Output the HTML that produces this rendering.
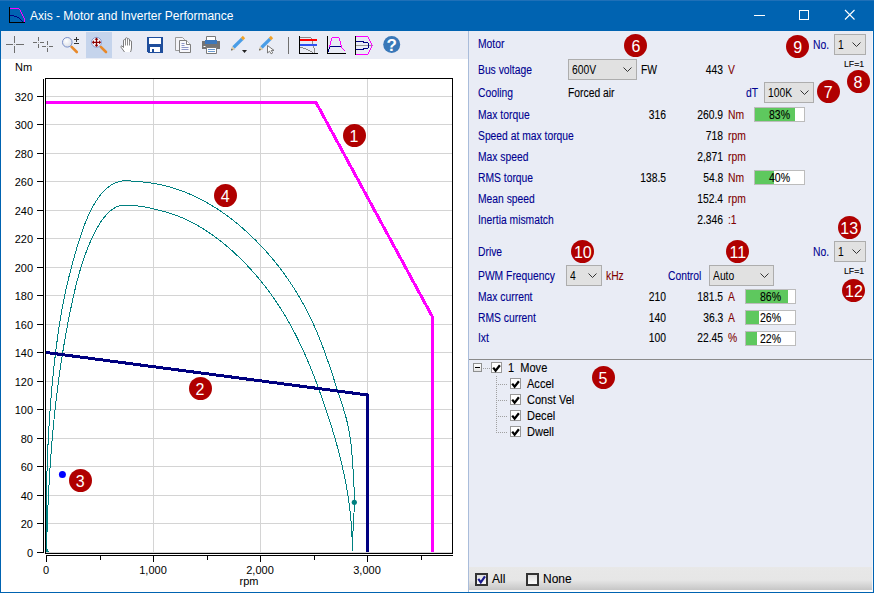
<!DOCTYPE html>
<html><head><meta charset="utf-8">
<style>
*{margin:0;padding:0;box-sizing:border-box}
html,body{width:874px;height:593px;overflow:hidden;background:#fff;font-family:"Liberation Sans",sans-serif}
.a{position:absolute}
#title{left:0;top:0;width:874px;height:31px;background:#0063B1}
#ttext{left:30px;top:9px;font-size:12px;color:#fff;white-space:nowrap}
#bl{left:0;top:0;width:1px;height:593px;background:#0063B1}
#br{left:873px;top:0;width:1px;height:593px;background:#0063B1}
#bb{left:0;top:592px;width:874px;height:1px;background:#0063B1}
#tool{left:1px;top:31px;width:467px;height:28px;background:#E9ECF5}
#sep{left:468px;top:31px;width:1px;height:561px;background:#A9BCDA}
#panel{left:469px;top:31px;width:404px;height:328px;background:#E9ECF5}
#split{left:469px;top:359px;width:404px;height:1px;background:#8A8A8A}
#tree{left:469px;top:360px;width:404px;height:207px;background:#E9ECF5}
#bot{left:469px;top:567px;width:404px;height:23px;background:linear-gradient(#E8E8E8 0,#E6E6E6 13px,#C6C6C6 23px)}
#botw{left:469px;top:590px;width:404px;height:2px;background:#fff}
#rw{left:872px;top:31px;width:1px;height:561px;background:#F4F4F8}
.t{position:absolute;white-space:nowrap;font-size:12px;line-height:13px;transform:scaleX(0.86);transform-origin:0 0;-webkit-text-stroke:0.1px currentColor}
.t.r2{transform-origin:100% 0}
.lb{color:#000090}
.v{color:#000}
.u{color:#800000}
.r{text-align:right}
.combo{position:absolute;background:#E1E1E1;border:1px solid #ADADAD}
.combo span{position:absolute;left:3px;top:4px;font-size:12px;line-height:13px;color:#000;transform:scaleX(0.86);transform-origin:0 0;white-space:nowrap}
.combo svg{position:absolute;right:4px;top:7px}
.bar{position:absolute;background:#fff;border:1px solid #BCBCBC;height:15px}
.bar i{position:absolute;left:0;top:0;bottom:0;background:#5EC85E}
.bar b{position:absolute;left:0;right:0;top:1px;text-align:center;font-weight:normal;font-size:12px;line-height:13px;color:#000;transform:scaleX(0.88);-webkit-text-stroke:0.1px #000}
.tt{color:#000;transform:scaleX(0.92)}
.num{position:absolute;width:23px;height:23px;border-radius:50%;background:#B00000;color:#fff;font-size:16px;line-height:26px;text-align:center}
</style></head><body>
<div id="title" class="a"></div>
<div id="ttext" class="a">Axis - Motor and Inverter Performance</div>
<div id="tool" class="a"></div>
<!--CHART-->
<svg class="a" style="left:0;top:0" width="468" height="593" viewBox="0 0 468 593">
<path d="M46 552.5H452 M46 523.5H452 M46 495.5H452 M46 466.5H452 M46 438.5H452 M46 409.5H452 M46 381.5H452 M46 352.5H452 M46 324.5H452 M46 295.5H452 M46 267.5H452 M46 238.5H452 M46 210.5H452 M46 181.5H452 M46 153.5H452 M46 124.5H452 M46 96.5H452 M153.5 79V553 M260.5 79V553 M367.5 79V553" stroke="#D4D4D4" stroke-width="1" fill="none" shape-rendering="crispEdges"/>
<rect x="45.5" y="78.5" width="407" height="475" fill="none" stroke="#000" stroke-width="1" shape-rendering="crispEdges"/>
<path d="M43.5 79V553 M37 552.5H43 M37 523.5H43 M37 495.5H43 M37 466.5H43 M37 438.5H43 M37 409.5H43 M37 381.5H43 M37 352.5H43 M37 324.5H43 M37 295.5H43 M37 267.5H43 M37 238.5H43 M37 210.5H43 M37 181.5H43 M37 153.5H43 M37 124.5H43 M37 96.5H43 M46 555.5H453 M46.5 555V562 M100.5 555V560 M153.5 555V562 M207.5 555V560 M260.5 555V562 M314.5 555V560 M367.5 555V562 M421.5 555V560" stroke="#000" stroke-width="1" fill="none" shape-rendering="crispEdges"/>
<g font-family="Liberation Sans" font-size="11" fill="#000"><text x="33" y="557" text-anchor="end">0</text><text x="33" y="528" text-anchor="end">20</text><text x="33" y="500" text-anchor="end">40</text><text x="33" y="471" text-anchor="end">60</text><text x="33" y="443" text-anchor="end">80</text><text x="33" y="414" text-anchor="end">100</text><text x="33" y="386" text-anchor="end">120</text><text x="33" y="357" text-anchor="end">140</text><text x="33" y="329" text-anchor="end">160</text><text x="33" y="300" text-anchor="end">180</text><text x="33" y="272" text-anchor="end">200</text><text x="33" y="243" text-anchor="end">220</text><text x="33" y="215" text-anchor="end">240</text><text x="33" y="186" text-anchor="end">260</text><text x="33" y="158" text-anchor="end">280</text><text x="33" y="129" text-anchor="end">300</text><text x="33" y="101" text-anchor="end">320</text><text x="46" y="574" text-anchor="middle">0</text><text x="153" y="574" text-anchor="middle">1,000</text><text x="260" y="574" text-anchor="middle">2,000</text><text x="367" y="574" text-anchor="middle">3,000</text><text x="249" y="585" text-anchor="middle">rpm</text><text x="15" y="71">Nm</text></g>
<path d="M46.37,550.99 L46.34,548.06 L46.31,545.13 L46.29,542.20 L46.27,539.27 L46.26,536.34 L46.24,533.41 L46.24,530.48 L46.23,527.55 L46.23,524.62 L46.24,521.69 L46.25,518.76 L46.26,515.82 L46.28,512.89 L46.30,509.96 L46.32,507.03 L46.35,504.09 L46.39,501.16 L46.43,498.23 L46.47,495.29 L46.52,492.36 L46.57,489.43 L46.63,486.49 L46.69,483.56 L46.76,480.63 L46.83,477.69 L46.91,474.76 L46.99,471.83 L47.08,468.90 L47.18,465.96 L47.27,463.03 L47.38,460.10 L47.49,457.17 L47.60,454.23 L47.72,451.30 L47.85,448.37 L47.98,445.44 L48.12,442.51 L48.27,439.58 L48.42,436.65 L48.57,433.72 L48.74,430.79 L48.90,427.86 L49.08,424.93 L49.26,422.00 L49.45,419.07 L49.64,416.15 L49.84,413.22 L50.05,410.29 L50.26,407.37 L50.48,404.44 L50.71,401.52 L50.95,398.60 L51.19,395.67 L51.43,392.75 L51.69,389.83 L51.95,386.91 L52.22,383.99 L52.50,381.07 L52.78,378.15 L53.08,375.23 L53.37,372.32 L53.68,369.40 L54.00,366.49 L54.32,363.57 L54.65,360.66 L54.99,357.75 L55.33,354.84 L55.68,351.93 L56.05,349.02 L56.42,346.11 L56.79,343.20 L57.18,340.30 L57.57,337.39 L57.98,334.49 L58.39,331.59 L58.81,328.69 L59.25,325.79 L59.69,322.89 L60.15,320.00 L60.62,317.10 L61.11,314.21 L61.61,311.33 L62.12,308.44 L62.65,305.56 L63.20,302.68 L63.76,299.81 L64.35,296.94 L64.95,294.07 L65.57,291.21 L66.20,288.35 L66.86,285.49 L67.53,282.64 L68.22,279.80 L68.92,276.95 L69.63,274.12 L70.36,271.29 L71.10,268.47 L71.85,265.65 L72.60,262.85 L73.37,260.04 L74.14,257.25 L74.93,254.46 L75.72,251.67 L76.54,248.89 L77.36,246.11 L78.21,243.33 L79.08,240.55 L79.97,237.76 L80.89,234.98 L81.83,232.19 L82.81,229.41 L83.82,226.64 L84.86,223.88 L85.95,221.13 L87.09,218.41 L88.27,215.72 L89.51,213.05 L90.80,210.42 L92.15,207.83 L93.57,205.28 L95.05,202.78 L96.60,200.34 L98.23,197.95 L99.94,195.63 L101.76,193.39 L103.70,191.26 L105.77,189.24 L107.99,187.35 L110.38,185.61 L112.92,184.06 L115.59,182.77 L118.35,181.78 L121.19,181.12 L124.08,180.79 L126.99,180.76 L129.92,180.93 L132.84,181.14 L135.77,181.37 L138.69,181.62 L141.61,181.89 L144.53,182.20 L147.44,182.54 L150.34,182.93 L153.24,183.36 L156.13,183.86 L159.02,184.41 L161.90,185.02 L164.76,185.69 L167.61,186.42 L170.44,187.20 L173.26,188.04 L176.05,188.93 L178.83,189.87 L181.58,190.86 L184.32,191.89 L187.03,192.98 L189.72,194.11 L192.40,195.29 L195.05,196.51 L197.68,197.78 L200.29,199.09 L202.88,200.44 L205.45,201.83 L208.00,203.27 L210.52,204.74 L213.03,206.25 L215.51,207.80 L217.97,209.39 L220.42,211.01 L222.83,212.67 L225.23,214.37 L227.61,216.09 L229.96,217.85 L232.29,219.64 L234.60,221.46 L236.89,223.31 L239.15,225.19 L241.39,227.10 L243.61,229.03 L245.81,230.99 L247.99,232.98 L250.14,234.99 L252.27,237.02 L254.37,239.08 L256.46,241.16 L258.52,243.26 L260.55,245.38 L262.57,247.52 L264.56,249.69 L266.52,251.87 L268.46,254.08 L270.38,256.30 L272.28,258.54 L274.15,260.81 L276.00,263.09 L277.82,265.39 L279.62,267.71 L281.39,270.05 L283.14,272.41 L284.87,274.78 L286.57,277.17 L288.24,279.58 L289.89,282.01 L291.52,284.45 L293.12,286.91 L294.69,289.38 L296.24,291.87 L297.77,294.38 L299.26,296.89 L300.74,299.43 L302.18,301.98 L303.61,304.54 L305.00,307.12 L306.37,309.71 L307.71,312.31 L309.03,314.93 L310.32,317.55 L311.59,320.20 L312.82,322.85 L314.04,325.51 L315.22,328.19 L316.38,330.87 L317.52,333.57 L318.63,336.28 L319.73,338.99 L320.80,341.72 L321.85,344.45 L322.89,347.19 L323.91,349.94 L324.91,352.69 L325.90,355.45 L326.88,358.22 L327.84,360.99 L328.79,363.76 L329.74,366.54 L330.67,369.32 L331.59,372.11 L332.51,374.90 L333.43,377.69 L334.34,380.48 L335.24,383.28 L336.15,386.07 L337.05,388.86 L337.95,391.66 L338.86,394.45 L339.76,397.24 L340.67,400.03 L341.57,402.82 L342.46,405.61 L343.34,408.41 L344.19,411.21 L345.01,414.01 L345.80,416.82 L346.56,419.64 L347.26,422.47 L347.92,425.31 L348.52,428.16 L349.07,431.03 L349.57,433.90 L350.02,436.78 L350.43,439.67 L350.80,442.58 L351.13,445.48 L351.44,448.40 L351.71,451.32 L351.96,454.24 L352.19,457.17 L352.41,460.11 L352.61,463.04 L352.79,465.98 L352.98,468.92 L353.16,471.85 L353.34,474.79 L353.51,477.73 L353.68,480.66 L353.83,483.60 L353.97,486.53 L354.09,489.47 L354.18,492.40 L354.25,495.33 L354.29,498.26 L354.30,501.20 L354.27,504.13 L354.21,507.06 L354.12,509.98 L354.00,512.91 L353.86,515.84 L353.71,518.77 L353.55,521.70 L353.38,524.63 L353.21,527.55 L353.05,530.48 L352.90,533.41 L352.76,536.34 L352.64,539.27 L352.55,542.20 L352.48,545.13 L352.45,548.07 L352.46,551.00" fill="none" stroke="#008080" stroke-width="1" shape-rendering="crispEdges"/>
<path d="M46.53,551.00 L46.59,548.27 L46.66,545.54 L46.72,542.81 L46.79,540.07 L46.87,537.34 L46.94,534.61 L47.03,531.87 L47.11,529.14 L47.20,526.41 L47.29,523.67 L47.38,520.94 L47.48,518.21 L47.58,515.48 L47.69,512.74 L47.80,510.01 L47.91,507.28 L48.03,504.55 L48.15,501.81 L48.28,499.08 L48.41,496.35 L48.54,493.62 L48.68,490.89 L48.82,488.15 L48.97,485.42 L49.12,482.69 L49.28,479.96 L49.44,477.23 L49.60,474.50 L49.77,471.77 L49.95,469.04 L50.13,466.32 L50.31,463.59 L50.50,460.86 L50.70,458.13 L50.90,455.41 L51.10,452.68 L51.31,449.95 L51.53,447.23 L51.75,444.50 L51.97,441.78 L52.20,439.05 L52.44,436.33 L52.68,433.61 L52.93,430.88 L53.18,428.16 L53.44,425.44 L53.70,422.72 L53.97,420.00 L54.24,417.28 L54.53,414.56 L54.81,411.85 L55.11,409.13 L55.41,406.41 L55.71,403.70 L56.02,400.98 L56.34,398.27 L56.66,395.55 L56.99,392.84 L57.33,390.13 L57.67,387.42 L58.02,384.71 L58.38,382.00 L58.74,379.29 L59.11,376.58 L59.48,373.88 L59.87,371.17 L60.25,368.47 L60.65,365.76 L61.05,363.06 L61.46,360.36 L61.88,357.66 L62.30,354.96 L62.73,352.26 L63.17,349.57 L63.62,346.87 L64.07,344.17 L64.53,341.48 L65.00,338.79 L65.47,336.10 L65.96,333.41 L66.45,330.72 L66.94,328.03 L67.45,325.34 L67.96,322.66 L68.48,319.97 L69.01,317.29 L69.55,314.61 L70.09,311.93 L70.65,309.25 L71.21,306.57 L71.77,303.89 L72.35,301.22 L72.94,298.54 L73.54,295.87 L74.14,293.21 L74.77,290.54 L75.40,287.88 L76.05,285.23 L76.72,282.58 L77.40,279.93 L78.11,277.29 L78.83,274.66 L79.58,272.03 L80.34,269.42 L81.13,266.81 L81.95,264.21 L82.79,261.62 L83.65,259.03 L84.55,256.46 L85.47,253.90 L86.43,251.35 L87.41,248.82 L88.43,246.29 L89.48,243.78 L90.57,241.28 L91.69,238.80 L92.85,236.33 L94.05,233.87 L95.29,231.43 L96.58,229.01 L97.92,226.63 L99.32,224.28 L100.80,221.98 L102.36,219.75 L104.02,217.57 L105.77,215.48 L107.64,213.47 L109.63,211.56 L111.74,209.78 L113.98,208.23 L116.36,206.97 L118.88,206.08 L121.52,205.55 L124.24,205.30 L127.00,205.25 L129.77,205.32 L132.53,205.47 L135.28,205.68 L138.00,205.96 L140.72,206.32 L143.41,206.74 L146.10,207.23 L148.78,207.77 L151.44,208.35 L154.10,208.97 L156.75,209.62 L159.40,210.30 L162.05,210.99 L164.68,211.71 L167.31,212.47 L169.92,213.27 L172.51,214.11 L175.08,215.01 L177.64,215.96 L180.17,216.97 L182.68,218.02 L185.17,219.12 L187.64,220.28 L190.09,221.47 L192.52,222.71 L194.93,224.00 L197.32,225.33 L199.69,226.70 L202.03,228.11 L204.36,229.56 L206.66,231.04 L208.95,232.56 L211.21,234.12 L213.45,235.71 L215.67,237.33 L217.87,238.98 L220.05,240.66 L222.21,242.37 L224.34,244.11 L226.46,245.87 L228.55,247.66 L230.62,249.47 L232.67,251.30 L234.70,253.15 L236.70,255.02 L238.69,256.91 L240.65,258.82 L242.59,260.75 L244.51,262.69 L246.41,264.65 L248.28,266.64 L250.14,268.63 L251.97,270.65 L253.79,272.68 L255.58,274.74 L257.35,276.80 L259.10,278.89 L260.83,280.99 L262.53,283.10 L264.22,285.24 L265.89,287.38 L267.53,289.55 L269.16,291.73 L270.76,293.92 L272.34,296.13 L273.90,298.36 L275.44,300.59 L276.97,302.85 L278.47,305.11 L279.95,307.40 L281.40,309.69 L282.84,312.00 L284.26,314.32 L285.66,316.65 L287.04,319.00 L288.40,321.36 L289.74,323.73 L291.05,326.12 L292.35,328.51 L293.63,330.92 L294.89,333.34 L296.13,335.77 L297.36,338.21 L298.56,340.66 L299.75,343.12 L300.92,345.59 L302.08,348.07 L303.22,350.56 L304.34,353.05 L305.45,355.56 L306.54,358.07 L307.62,360.59 L308.68,363.11 L309.74,365.65 L310.77,368.19 L311.80,370.73 L312.81,373.28 L313.81,375.84 L314.80,378.40 L315.78,380.96 L316.75,383.53 L317.70,386.11 L318.65,388.68 L319.59,391.26 L320.52,393.85 L321.44,396.43 L322.35,399.02 L323.25,401.61 L324.15,404.20 L325.03,406.79 L325.91,409.39 L326.78,411.99 L327.64,414.58 L328.49,417.18 L329.33,419.79 L330.16,422.39 L330.98,425.00 L331.79,427.61 L332.59,430.22 L333.38,432.84 L334.15,435.45 L334.91,438.07 L335.66,440.69 L336.40,443.32 L337.13,445.95 L337.84,448.58 L338.54,451.21 L339.22,453.84 L339.89,456.48 L340.55,459.12 L341.19,461.77 L341.82,464.42 L342.43,467.07 L343.03,469.72 L343.61,472.38 L344.17,475.04 L344.72,477.70 L345.25,480.37 L345.76,483.04 L346.26,485.72 L346.74,488.39 L347.20,491.08 L347.64,493.76 L348.07,496.45 L348.47,499.14 L348.86,501.84 L349.22,504.54 L349.57,507.25 L349.90,509.96 L350.20,512.67 L350.49,515.39 L350.75,518.11 L351.00,520.83 L351.22,523.56 L351.42,526.30 L351.60,529.04 L351.75,531.78 L351.89,534.53 L352.00,537.28 L352.08,540.04 L352.14,542.80 L352.18,545.57 L352.20,548.34 L352.19,551.12" fill="none" stroke="#008080" stroke-width="1" shape-rendering="crispEdges"/>
<path d="M46 549h2v3h-2z M48 551h1v1h-1z" fill="#008080" shape-rendering="crispEdges"/>
<polyline points="46,352.5 367.5,395 367.5,552" fill="none" stroke="#000080" stroke-width="3" shape-rendering="crispEdges" stroke-linejoin="miter"/>
<polyline points="46,102.5 316,102.5 432.5,317 432.5,552" fill="none" stroke="#FF00FF" stroke-width="3" shape-rendering="crispEdges"/>
<circle cx="62.4" cy="474.4" r="3.5" fill="#0000FF"/>
<circle cx="354.3" cy="502.3" r="2.6" fill="#008080"/>
</svg>
<!--/CHART-->
<div id="sep" class="a"></div>
<!--TOOL-->
<svg class="a" style="left:0;top:0" width="874" height="31" viewBox="0 0 874 31" shape-rendering="crispEdges"><path d="M9 7h1v15h15v1H9z" fill="#000"/><path d="M10 8h9v1h-9z M19 9h1v1h-1z M20 10h1v2h-1z M21 12h1v2h-1z M22 14h1v2h-1z M23 16h1v2h-1z M24 18h1v4h-1z" fill="#FF00FF"/><path d="M10 15h4v1h-4z M14 16h3v1h-3z M17 17h2v1h-2z M19 18h1v1h-1z M20 19h1v1h-1z M21 20h1v1h-1z M22 21h1v1h-1z" fill="#000080"/><path d="M754 15h11v1h-11z" fill="#fff"/><rect x="799.5" y="10.5" width="9" height="9" fill="none" stroke="#fff"/><path d="M845 10L854.5 19.5M854.5 10L845 19.5" stroke="#fff" stroke-width="1.1" shape-rendering="auto"/></svg>
<svg class="a" style="left:0;top:31px" width="468" height="28" viewBox="0 31 468 28">
<rect x="86" y="32" width="26" height="26" fill="#C5D4EC"/>
<path d="M6 44h7v1H6z M16 44h8v1h-8z M14 36h1v7h-1z M14 46h1v7h-1z" fill="#6E6E6E" shape-rendering="crispEdges"/><path d="M14 44h1v1h-1z" fill="#B0B0B0" shape-rendering="crispEdges"/>
<path d="M33 42h4v1h-4z M40 42h4v1h-4z M38 37h1v4h-1z M38 44h1v4h-1z M42 46h4v1h-4z M49 46h4v1h-4z M47 41h1v4h-1z M47 48h1v4h-1z" fill="#6E6E6E" shape-rendering="crispEdges"/><path d="M38 42h1v1h-1z M47 46h1v1h-1z" fill="#B0B0B0" shape-rendering="crispEdges"/>
<defs><radialGradient id="lens" cx="0.4" cy="0.35" r="0.7"><stop offset="0" stop-color="#FFFFFF"/><stop offset="1" stop-color="#D8DCE6"/></radialGradient></defs>
<path d="M71.6 46.8L76.8 52" stroke="#E8892A" stroke-width="2.6" stroke-linecap="round"/>
<circle cx="67.3" cy="42.3" r="4.8" fill="url(#lens)" stroke="#7A8FC8" stroke-width="1"/>
<path d="M74 39.5h5M76.5 37v5M74 43.5h5" stroke="#333" stroke-width="1" shape-rendering="crispEdges"/>
<path d="M100.8 46.8L106 52" stroke="#E8892A" stroke-width="2.6" stroke-linecap="round"/>
<circle cx="96.5" cy="42.3" r="4.9" fill="#FBFBFD" stroke="#7A8FC8" stroke-width="0.9"/>
<path d="M93 42.3h7M96.5 38.8v7" stroke="#8B0000" stroke-width="1.3"/>
<path d="M91.8 42.3l2.2-2v4z M101.2 42.3l-2.2-2v4z M96.5 37.6l-2 2.2h4z M96.5 47l-2-2.2h4z" fill="#8B0000"/>
<path d="M124.5 52 L121 47.2 Q120.6 46 121.8 45.8 L123.5 47.5 L123.5 40.2 Q124.5 39 125.5 40.2 L125.5 38.3 Q126.5 37.2 127.5 38.3 L127.5 39.2 Q128.5 38.2 129.5 39.2 L129.5 41.2 Q130.5 40.2 131.5 41.2 L131.5 48 Q131.3 50.5 130.5 52" fill="#fff" stroke="#6E6E6E" stroke-width="0.9"/>
<path d="M125.5 40.2V45.5M127.5 39.2V45.5M129.5 41.2V45.5" stroke="#6E6E6E" stroke-width="0.8"/>
<path d="M147 37h16v16h-15l-1-1z" fill="#1F4E9C" shape-rendering="crispEdges"/>
<path d="M149 38h12v6h-12z M150 47h10v5h-10z" fill="#fff" shape-rendering="crispEdges"/>
<path d="M152 49h2v3h-2z" fill="#1F4E9C" shape-rendering="crispEdges"/>
<path d="M175.5 37.5h7l2 2v11h-9z" fill="#F4F4F8" stroke="#9A9A9A"/>
<path d="M179.5 40.5h7l4 4v8h-11z" fill="#F8F8FC" stroke="#7E7E7E"/>
<path d="M186.5 40.5v4h4" fill="#fff" stroke="#7E7E7E"/>
<path d="M181.5 43.5h3M181.5 45.5h3M181.5 47.5h7M181.5 49.5h7" stroke="#8C96C8" stroke-width="1"/>
<path d="M206.5 36.5h9v5h-9z" fill="#fff" stroke="#7A7A7A"/>
<path d="M202 41h18v8h-18z" fill="#747474"/>
<path d="M205 40h12v4h-12z" fill="#3C78BC"/>
<path d="M203.5 46h2v1h-2z" fill="#fff"/>
<path d="M206.5 47.5h10v6h-10z" fill="#fff" stroke="#7A7A7A"/>
<path d="M208 49.5h7M208 51.5h7" stroke="#6A9AD0" stroke-width="1"/>
<path d="M233.5 47.5L242.2 38.8" stroke="#4A9DE6" stroke-width="3.3"/>
<path d="M242 39L244 37" stroke="#F2A227" stroke-width="3.2"/>
<path d="M231 50.5L232 46.3L235.2 49.5z" fill="#DCC8A0"/>
<path d="M231 50.5L231.5 48.6L233 50z" fill="#555"/>
<path d="M261.5 47.5L270.2 38.8" stroke="#4A9DE6" stroke-width="3.3"/>
<path d="M270 39L272 37" stroke="#F2A227" stroke-width="3.2"/>
<path d="M259 50.5L260 46.3L263.2 49.5z" fill="#DCC8A0"/>
<path d="M259 50.5L259.5 48.6L261 50z" fill="#555"/>
<path d="M242 50h5l-2.5 3z" fill="#222"/>
<path d="M267.5 45.5v7.5l2-1.8 1.6 2.6 1.6-0.9-1.5-2.5h2.8z" fill="#fff" stroke="#6A6A6A" stroke-width="0.9" stroke-linejoin="round"/>
<path d="M288 37h1v17h-1z" fill="#707070" shape-rendering="crispEdges"/>
<g shape-rendering="crispEdges">
<path d="M299 36h1v17h18v1h-19z" fill="#000"/>
<path d="M300 37h11v1h-11z M311 38h1v1h-1z M312 41h1v3h-1z M313 44h1v4h-1z M314 48h1v5h-1z" fill="#8A8A8A"/>
<path d="M300 47h3v1h-3z M303 48h3v1h-3z M306 49h2v1h-2z M308 50h2v1h-2z M310 51h2v1h-2z M312 52h1v1h-1z" fill="#8A8A8A"/>
<path d="M300 39h17v2h-17z" fill="#FF0000"/>
<path d="M300 44h17v2h-17z" fill="#3050F0"/>
<path d="M327 36h1v17h18v1h-19z" fill="#000"/>
<path d="M332 37h7v1h-7z M331 38h1v3h-1z M339 38h1v3h-1z M330 41h1v4h-1z M340 41h1v4h-1z M329 45h1v4h-1z M341 45h1v3h-1z M328 49h1v3h-1z M342 48h1v1h-1z M343 49h1v1h-1z M344 50h1v1h-1z" fill="#FF00FF"/>
<path d="M330 46h11v1h-11z M329 47h1v2h-1z M328 49h1v3h-1z" fill="#000080"/>
<path d="M355 36h1v19h-1z" fill="#000"/>
<path d="M356 36h12v1h-12z M356 54h12v1h-12z M368 37h1v2h-1z M368 52h1v2h-1z M369 39h1v2h-1z M369 50h1v2h-1z M370 41h1v2h-1z M370 48h1v2h-1z M371 43h1v2h-1z M371 46h1v2h-1z M372 45h1v1h-1z" fill="#FF00FF"/>
<path d="M356 45h16v1h-16z" fill="#999"/>
<path d="M356 41h8v1h-8z M356 49h8v1h-8z M363 42h5v1h-5z M363 48h5v1h-5z M368 43h1v5h-1z" fill="#000080"/>
</g>
<circle cx="391.7" cy="44.4" r="8.5" fill="#3A78B8"/>
<text x="391.8" y="51" text-anchor="middle" font-family="Liberation Sans" font-weight="bold" font-size="17" fill="#fff">?</text>
</svg>
<!--/TOOL-->
<div id="panel" class="a"></div>
<div id="split" class="a"></div>
<div id="tree" class="a"></div>
<div id="bot" class="a"></div>
<div id="botw" class="a"></div>
<div id="rw" class="a"></div>
<!--PANEL-->
<div class="t lb" style="left:478px;top:38px;">Motor</div>
<div class="t lb" style="left:478px;top:64px;">Bus voltage</div>
<div class="t lb" style="left:478px;top:87px;">Cooling</div>
<div class="t lb" style="left:478px;top:109px;">Max torque</div>
<div class="t lb" style="left:478px;top:130px;">Speed at max torque</div>
<div class="t lb" style="left:478px;top:151px;">Max speed</div>
<div class="t lb" style="left:478px;top:172px;">RMS torque</div>
<div class="t lb" style="left:478px;top:193px;">Mean speed</div>
<div class="t lb" style="left:478px;top:214px;">Inertia mismatch</div>
<div class="t lb" style="left:478px;top:246px;">Drive</div>
<div class="t lb" style="left:478px;top:270px;">PWM Frequency</div>
<div class="t lb" style="left:478px;top:291px;">Max current</div>
<div class="t lb" style="left:478px;top:312px;">RMS current</div>
<div class="t lb" style="left:478px;top:332px;">Ixt</div>
<div class="t lb" style="left:813px;top:39px;">No.</div>
<div class="combo" style="left:834px;top:34px;width:32px;height:21px"><span>1</span><svg width="9" height="5" viewBox="0 0 9 5"><path d="M0.5 0.5L4.5 4.5L8.5 0.5" fill="none" stroke="#333" stroke-width="1"/></svg></div>
<div class="t v" style="left:844px;top:57px;font-size:9.5px;transform:scaleX(0.92)">LF=1</div>
<div class="combo" style="left:568px;top:59px;width:69px;height:21px"><span>600V</span><svg width="9" height="5" viewBox="0 0 9 5"><path d="M0.5 0.5L4.5 4.5L8.5 0.5" fill="none" stroke="#333" stroke-width="1"/></svg></div>
<div class="t v" style="left:641px;top:64px;">FW</div>
<div class="t v r2" style="right:151px;top:64px">443</div>
<div class="t u" style="left:728px;top:64px;">V</div>
<div class="t v" style="left:568px;top:87px;">Forced air</div>
<div class="t lb" style="left:746px;top:87px;">dT</div>
<div class="combo" style="left:764px;top:82px;width:50px;height:21px"><span>100K</span><svg width="9" height="5" viewBox="0 0 9 5"><path d="M0.5 0.5L4.5 4.5L8.5 0.5" fill="none" stroke="#333" stroke-width="1"/></svg></div>
<div class="t v r2" style="right:208px;top:109px">316</div>
<div class="t v r2" style="right:151px;top:109px">260.9</div>
<div class="t u" style="left:728px;top:109px;">Nm</div>
<div class="bar" style="left:754px;top:107px;width:51px"><i style="width:40px"></i><b>83%</b></div>
<div class="t v r2" style="right:151px;top:130px">718</div>
<div class="t u" style="left:728px;top:130px;">rpm</div>
<div class="t v r2" style="right:151px;top:151px">2,871</div>
<div class="t u" style="left:728px;top:151px;">rpm</div>
<div class="t v r2" style="right:208px;top:172px">138.5</div>
<div class="t v r2" style="right:151px;top:172px">54.8</div>
<div class="t u" style="left:728px;top:172px;">Nm</div>
<div class="bar" style="left:754px;top:170px;width:51px"><i style="width:19px"></i><b>40%</b></div>
<div class="t v r2" style="right:151px;top:193px">152.4</div>
<div class="t u" style="left:728px;top:193px;">rpm</div>
<div class="t v r2" style="right:151px;top:214px">2.346</div>
<div class="t u" style="left:728px;top:214px;">:1</div>
<div class="t lb" style="left:813px;top:246px;">No.</div>
<div class="combo" style="left:834px;top:241px;width:32px;height:21px"><span>1</span><svg width="9" height="5" viewBox="0 0 9 5"><path d="M0.5 0.5L4.5 4.5L8.5 0.5" fill="none" stroke="#333" stroke-width="1"/></svg></div>
<div class="t v" style="left:844px;top:264px;font-size:9.5px;transform:scaleX(0.92)">LF=1</div>
<div class="combo" style="left:566px;top:265px;width:36px;height:21px"><span>4</span><svg width="9" height="5" viewBox="0 0 9 5"><path d="M0.5 0.5L4.5 4.5L8.5 0.5" fill="none" stroke="#333" stroke-width="1"/></svg></div>
<div class="t u" style="left:606px;top:270px;">kHz</div>
<div class="t lb" style="left:668px;top:270px;">Control</div>
<div class="combo" style="left:709px;top:265px;width:65px;height:21px"><span>Auto</span><svg width="9" height="5" viewBox="0 0 9 5"><path d="M0.5 0.5L4.5 4.5L8.5 0.5" fill="none" stroke="#333" stroke-width="1"/></svg></div>
<div class="t v r2" style="right:208px;top:291px">210</div>
<div class="t v r2" style="right:151px;top:291px">181.5</div>
<div class="t u" style="left:728px;top:291px;">A</div>
<div class="bar" style="left:745px;top:289px;width:51px"><i style="width:42px"></i><b>86%</b></div>
<div class="t v r2" style="right:208px;top:312px">140</div>
<div class="t v r2" style="right:151px;top:312px">36.3</div>
<div class="t u" style="left:728px;top:312px;">A</div>
<div class="bar" style="left:745px;top:310px;width:51px"><i style="width:13px"></i><b>26%</b></div>
<div class="t v r2" style="right:208px;top:332px">100</div>
<div class="t v r2" style="right:151px;top:332px">22.45</div>
<div class="t u" style="left:728px;top:332px;">%</div>
<div class="bar" style="left:745px;top:331px;width:51px"><i style="width:11px"></i><b>22%</b></div>
<div class="num" style="left:342.55px;top:124.4px">1</div>
<div class="num" style="left:188.55px;top:377.4px">2</div>
<div class="num" style="left:68.6px;top:469.4px">3</div>
<div class="num" style="left:213.6px;top:184.3px">4</div>
<div class="num" style="left:591.5px;top:366.3px">5</div>
<div class="num" style="left:624.4px;top:34.4px">6</div>
<div class="num" style="left:816.6px;top:80.4px">7</div>
<div class="num" style="left:846.5px;top:70.4px">8</div>
<div class="num" style="left:786.3px;top:34.5px">9</div>
<div class="num" style="left:571.3px;top:240.0px">10</div>
<div class="num" style="left:726.4px;top:240.1px">11</div>
<div class="num" style="left:842.4px;top:279.3px">12</div>
<div class="num" style="left:837.7px;top:216.2px">13</div>
<svg class="a" style="left:469px;top:360px" width="404" height="207" viewBox="469 360 404 207" shape-rendering="crispEdges">
<defs><linearGradient id="mg" x1="0" y1="0" x2="0" y2="1"><stop offset="0" stop-color="#fff"/><stop offset="1" stop-color="#E2E2E2"/></linearGradient><linearGradient id="cg" x1="0" y1="0" x2="0" y2="1"><stop offset="0" stop-color="#E6E6E6"/><stop offset="1" stop-color="#FFFFFF"/></linearGradient></defs>
<rect x="473.5" y="363.5" width="8" height="8" fill="url(#mg)" stroke="#8E8F8F"/>
<path d="M475 367.5H480" stroke="#000"/>
<path d="M483 368h1v1h-1z M485 368h1v1h-1z M487 368h1v1h-1z M489 368h1v1h-1z M496 376h1v1h-1z M496 378h1v1h-1z M496 380h1v1h-1z M496 382h1v1h-1z M496 384h1v1h-1z M496 386h1v1h-1z M496 388h1v1h-1z M496 390h1v1h-1z M496 392h1v1h-1z M496 394h1v1h-1z M496 396h1v1h-1z M496 398h1v1h-1z M496 400h1v1h-1z M496 402h1v1h-1z M496 404h1v1h-1z M496 406h1v1h-1z M496 408h1v1h-1z M496 410h1v1h-1z M496 412h1v1h-1z M496 414h1v1h-1z M496 416h1v1h-1z M496 418h1v1h-1z M496 420h1v1h-1z M496 422h1v1h-1z M496 424h1v1h-1z M496 426h1v1h-1z M496 428h1v1h-1z M496 430h1v1h-1z M496 432h1v1h-1z M498 384h1v1h-1z M500 384h1v1h-1z M502 384h1v1h-1z M504 384h1v1h-1z M506 384h1v1h-1z M498 400h1v1h-1z M500 400h1v1h-1z M502 400h1v1h-1z M504 400h1v1h-1z M506 400h1v1h-1z M498 416h1v1h-1z M500 416h1v1h-1z M502 416h1v1h-1z M504 416h1v1h-1z M506 416h1v1h-1z M498 432h1v1h-1z M500 432h1v1h-1z M502 432h1v1h-1z M504 432h1v1h-1z M506 432h1v1h-1z" fill="#A0A0A0"/>
<rect x="491.5" y="362.5" width="10" height="10" fill="#fff" stroke="#989898"/>
<path d="M493.2 367.6L495.6 370.6L499.9 365.2" fill="none" stroke="#000" stroke-width="2.3" shape-rendering="auto" stroke-linejoin="miter"/>
<rect x="510.5" y="378.5" width="10" height="10" fill="#fff" stroke="#989898"/>
<path d="M512.2 383.6L514.6 386.6L518.9 381.2" fill="none" stroke="#000" stroke-width="2.3" shape-rendering="auto" stroke-linejoin="miter"/>
<rect x="510.5" y="394.5" width="10" height="10" fill="#fff" stroke="#989898"/>
<path d="M512.2 399.6L514.6 402.6L518.9 397.2" fill="none" stroke="#000" stroke-width="2.3" shape-rendering="auto" stroke-linejoin="miter"/>
<rect x="510.5" y="410.5" width="10" height="10" fill="#fff" stroke="#989898"/>
<path d="M512.2 415.6L514.6 418.6L518.9 413.2" fill="none" stroke="#000" stroke-width="2.3" shape-rendering="auto" stroke-linejoin="miter"/>
<rect x="510.5" y="426.5" width="10" height="10" fill="#fff" stroke="#989898"/>
<path d="M512.2 431.6L514.6 434.6L518.9 429.2" fill="none" stroke="#000" stroke-width="2.3" shape-rendering="auto" stroke-linejoin="miter"/>
</svg>
<div class="t tt" style="left:508px;top:362px;">1&nbsp;&nbsp;Move</div>
<div class="t tt" style="left:527px;top:378px;">Accel</div>
<div class="t tt" style="left:527px;top:394px;">Const Vel</div>
<div class="t tt" style="left:527px;top:410px;">Decel</div>
<div class="t tt" style="left:527px;top:426px;">Dwell</div>
<svg class="a" style="left:469px;top:567px" width="404" height="23" viewBox="469 567 404 23" shape-rendering="crispEdges"><rect x="476" y="574" width="11" height="11" fill="url(#cg2)" stroke="#333" stroke-width="2"/><rect x="527" y="574" width="11" height="11" fill="url(#cg2)" stroke="#333" stroke-width="2"/><defs><linearGradient id="cg2" x1="0" y1="0" x2="0" y2="1"><stop offset="0" stop-color="#DCDCDC"/><stop offset="1" stop-color="#FFFFFF"/></linearGradient></defs><path d="M478.3 578.8L480.8 582.3L485 576.3" fill="none" stroke="#1A1A8C" stroke-width="2.2" shape-rendering="auto"/></svg>
<div class="t tt" style="left:492px;top:573px;transform:none">All</div>
<div class="t tt" style="left:543px;top:573px;transform:none">None</div>
<!--/PANEL-->
<div id="bl" class="a"></div>
<div id="br" class="a"></div>
<div id="bb" class="a"></div>
<div class="a" style="left:0;top:0;width:874px;height:1px;background:#1F70B8"></div>
</body></html>
